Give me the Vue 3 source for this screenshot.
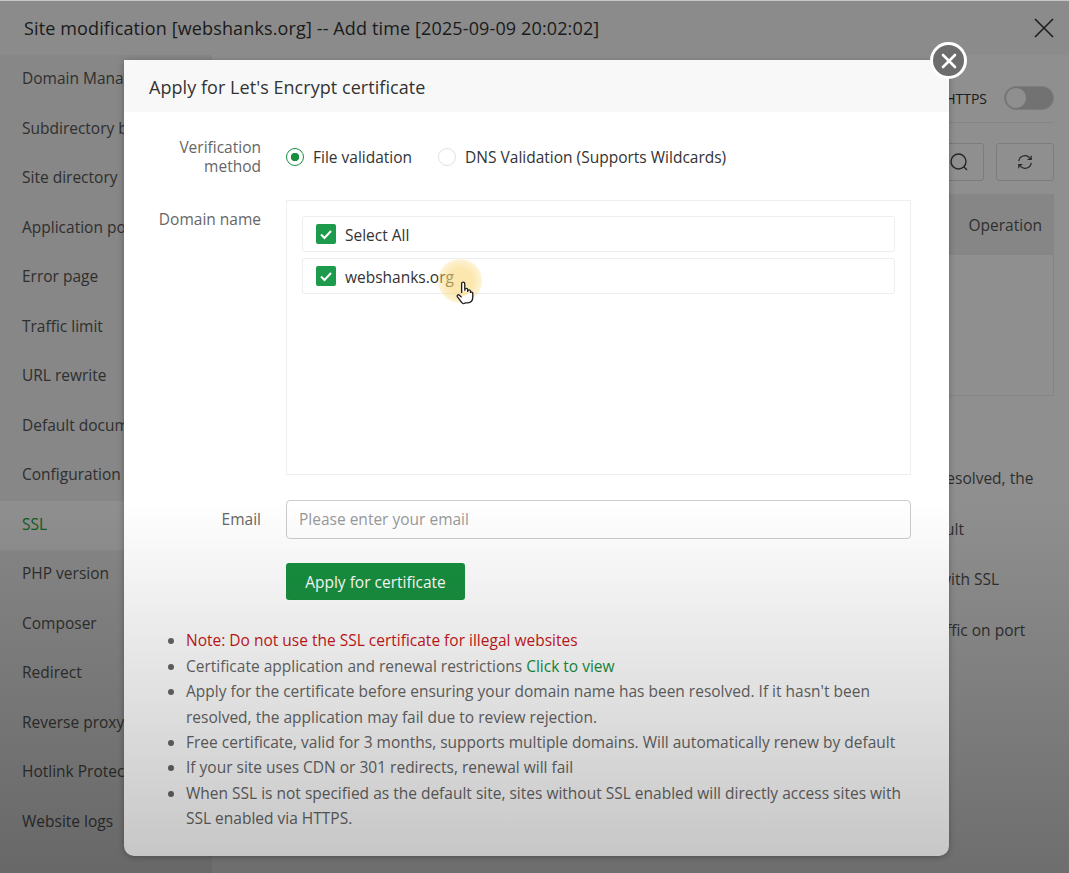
<script setup>
const menu = [
  "Domain Manager",
  "Subdirectory binding",
  "Site directory",
  "Application pool",
  "Error page",
  "Traffic limit",
  "URL rewrite",
  "Default document",
  "Configuration file",
  "SSL",
  "PHP version",
  "Composer",
  "Redirect",
  "Reverse proxy",
  "Hotlink Protection",
  "Website logs",
];

const behindLines = [
  { text: "resolved, the", left: 728 },
  { text: "ult", left: 733 },
  { text: "with SSL", left: 727 },
  { text: "ffic on port", left: 734 },
];

const notes = [
  { text: "Certificate application and renewal restrictions ", link: "Click to view" },
  { text: "Apply for the certificate before ensuring your domain name has been resolved. If it hasn't been resolved, the application may fail due to review rejection." },
  { text: "Free certificate, valid for 3 months, supports multiple domains. Will automatically renew by default" },
  { text: "If your site uses CDN or 301 redirects, renewal will fail" },
  { text: "When SSL is not specified as the default site, sites without SSL enabled will directly access sites with SSL enabled via HTTPS." },
];
</script>

<template>
  <div class="page">
    <div class="drawer">
      <header class="drawer-head">
        <span>Site modification [webshanks.org] -- Add time [2025-09-09 20:02:02]</span>
        <svg class="drawer-close" viewBox="0 0 20 20" width="20" height="20">
          <path d="M1 1 19 19M19 1 1 19" stroke="#333" stroke-width="1.6" fill="none" />
        </svg>
      </header>
      <div class="drawer-body">
        <ul class="menu">
          <li v-for="m in menu" :key="m" :class="{ active: m === 'SSL' }">{{ m }}</li>
        </ul>
        <div class="content">
          <div class="https-row">
            <span>Force HTTPS</span>
            <span class="switch"><i></i></span>
          </div>
          <div class="tools">
            <span class="tool search">
              <svg viewBox="0 0 20 20" width="20" height="20">
                <circle cx="9.5" cy="9.5" r="7.5" stroke="#444" stroke-width="1.4" fill="none" />
                <path d="M15 15 18 18" stroke="#444" stroke-width="1.4" />
              </svg>
            </span>
            <span class="tool refresh">
              <svg viewBox="0 0 18 18" width="16" height="16">
                <path d="M2 8a7 7 0 0 1 12-4l2 2M16 10a7 7 0 0 1-12 4l-2-2M16 2v4h-4M2 16v-4h4" stroke="#444" stroke-width="1.3" fill="none" />
              </svg>
            </span>
          </div>
          <div class="table">
            <div class="table-head">Operation</div>
          </div>
          <div class="tips">
            <p v-for="l in behindLines" :key="l.text" :style="{ paddingLeft: l.left + 'px' }">{{ l.text }}</p>
          </div>
        </div>
      </div>
    </div>

    <div class="dim"></div>

    <section class="modal">
      <h3 class="modal-title">Apply for Let's Encrypt certificate</h3>
      <div class="modal-body">
        <div class="row method">
          <label class="label">Verification method</label>
          <div class="radios">
            <span class="radio on"><i></i>File validation</span>
            <span class="radio"><i></i>DNS Validation (Supports Wildcards)</span>
          </div>
        </div>
        <div class="row domain">
          <label class="label">Domain name</label>
          <div class="domain-box">
            <div class="check-item">
              <span class="check"><svg viewBox="0 0 20 20" width="20" height="20"><path d="M5 10.5 8.5 14 15 7" stroke="#fff" stroke-width="2" fill="none" /></svg></span>
              <span class="check-text">Select All</span>
            </div>
            <div class="check-item">
              <span class="check"><svg viewBox="0 0 20 20" width="20" height="20"><path d="M5 10.5 8.5 14 15 7" stroke="#fff" stroke-width="2" fill="none" /></svg></span>
              <span class="check-text">webshanks.org</span>
            </div>
          </div>
        </div>
        <div class="row email">
          <label class="label">Email</label>
          <input class="input" type="text" placeholder="Please enter your email" />
        </div>
        <div class="row submit">
          <span class="label"></span>
          <button type="button" class="btn">Apply for certificate</button>
        </div>
        <ul class="notes">
          <li class="danger">Note: Do not use the SSL certificate for illegal websites</li>
          <li v-for="n in notes" :key="n.text">{{ n.text }}<a v-if="n.link">{{ n.link }}</a></li>
        </ul>
      </div>
    </section>

    <button type="button" class="modal-close">
      <svg viewBox="0 0 20 20" width="20" height="20">
        <path d="M4 4 16 16M16 4 4 16" stroke="#fff" stroke-width="2.6" stroke-linecap="round" />
      </svg>
    </button>

    <div class="halo"></div>
    <svg class="cursor" viewBox="0 0 16 22" width="18" height="24" preserveAspectRatio="none">
      <path d="M5 11V2.5a1.4 1.4 0 0 1 2.8 0V9m0-1a1.3 1.3 0 0 1 2.6 0v2m0-1a1.3 1.3 0 0 1 2.5 0v2m0-.5a1.2 1.2 0 0 1 2 .5v4c0 3-1.5 5-4.5 5H8.5C6.500 21.500 5.500 20.500 4.500 19L1.300 14.500c-.8-1.300.7-2.500 1.800-1.500L5 15" stroke="#222" stroke-width="1.2" fill="#fff" stroke-linejoin="round" />
    </svg>
    <div class="fade"></div>
  </div>
</template>

<style>
html, body { margin: 0; background: #fff; }
</style>

<style scoped>
.page { position: relative; width: 1069px; height: 873px; overflow: hidden; font-family: "Open Sans", "Liberation Sans", sans-serif; font-size: 15.5px; color: #333; background: #fff; }

.drawer { height: 873px; display: flex; flex-direction: column; }
.drawer-head { height: 55px; flex: none; display: flex; align-items: center; justify-content: space-between; padding: 0 15px 0 24px; background: #f8f8f8; font-size: 18px; letter-spacing: 0.13px; color: #333; box-sizing: border-box; }
.drawer-close { flex: none; }
.drawer-body { flex: 1; display: flex; min-height: 0; }
.menu { width: 212px; flex: none; list-style: none; margin: 0; padding: 0; background: #f0f0f0; color: #555; box-sizing: border-box; }
.menu li { height: 49.5px; line-height: 47px; padding-left: 22px; white-space: nowrap; }
.menu li.active { background: #fff; color: #20a53a; }

.content { flex: 1; min-width: 0; background: #fff; padding-right: 15px; box-sizing: border-box; display: flex; flex-direction: column; align-items: flex-end; }
.https-row { align-self: stretch; box-sizing: border-box; height: 68px; padding: 31px 0 12px; border-bottom: 1px solid #eee; display: flex; justify-content: flex-end; align-items: center; gap: 17px; color: #333; font-size: 14px; }
.switch { width: 50px; height: 24px; border-radius: 12px; background: #ccc; display: block; position: relative; border: 1px solid #ddd; box-sizing: border-box; }
.switch i { position: absolute; left: 0; top: 0; width: 22px; height: 22px; border-radius: 50%; background: #fff; border: 1px solid #ccc; box-sizing: border-box; }
.tools { margin-top: 20px; display: flex; gap: 12px; }
.tool { height: 38px; border: 1px solid #ddd; border-radius: 3px; box-sizing: border-box; display: flex; align-items: center; justify-content: center; }
.tool.search { width: 50px; }
.tool.refresh { width: 58px; }
.table { margin-top: 13px; width: 640px; height: 202px; border: 1px solid #eee; box-sizing: border-box; }
.table-head { height: 60px; background: #efefef; text-align: right; padding-right: 11px; line-height: 60px; color: #555; }
.tips { align-self: stretch; margin-top: 57px; }
.tips p { margin: 0; line-height: 50.7px; color: #555; white-space: nowrap; }

.dim { position: absolute; inset: 0; background: rgba(0, 0, 0, 0.44); background-clip: padding-box; border-top: 1px solid rgba(0, 0, 0, 0.2); }

.modal { position: absolute; left: 124px; top: 60px; width: 825px; height: 796px; background: #fff; border-radius: 3px 3px 10px 10px; box-shadow: 0 1px 6px rgba(0, 0, 0, 0.3); }
.modal-title { margin: 0; height: 52px; line-height: 54px; padding-left: 25px; background: #f8f8f8; font-size: 18px; font-weight: 400; letter-spacing: 0.05px; color: #333; }
.modal-body { padding: 0 38px 0 0; }
.row { display: flex; gap: 25px; }
.label { width: 137px; flex: none; text-align: right; color: #666; line-height: 19px; }
.method { padding-top: 26px; height: 88px; box-sizing: border-box; align-items: flex-start; }
.method .label { padding-left: 30px; box-sizing: border-box; }
.radios { display: flex; gap: 26px; padding-top: 9px; color: #333; }
.radio { display: inline-flex; align-items: center; gap: 9px; line-height: 20px; }
.radio i { width: 18px; height: 18px; border-radius: 50%; border: 1px solid #e2e2e2; background: #fff; box-sizing: border-box; display: block; }
.radio.on i { border: 1.5px solid #178f3f; background: radial-gradient(circle, #178f3f 0 4px, #fff 4.5px); }
.domain .label { padding-top: 10px; }
.domain-box { width: 625px; height: 275px; border: 1px solid #eee; box-sizing: border-box; padding: 15px; display: flex; flex-direction: column; gap: 6px; }
.check-item { height: 36px; border: 1px solid #eee; border-radius: 3px; display: flex; align-items: center; gap: 9px; padding-left: 13px; box-sizing: border-box; color: #333; }
.check-text { padding-top: 2px; }
.check { width: 20px; height: 20px; border-radius: 2px; background: #1d9a4b; display: block; }
.check svg { display: block; }
.email { margin-top: 25px; align-items: center; }
.input { width: 625px; height: 39px; border: 1px solid #ccc; border-radius: 4px; padding: 0 12px 2px; box-sizing: border-box; font: inherit; outline: none; background: transparent; }
.input::placeholder { color: #999; opacity: 1; }
.submit { margin-top: 24px; }
.btn { width: 179px; height: 37px; background: #178f3f; color: #fff; border: none; border-radius: 3px; font: inherit; cursor: pointer; }
.notes { margin: 28.4px 0 0; padding: 0 0 0 62px; line-height: 25.4px; color: #666; }
.notes li::marker { color: #666; }
.notes .danger { color: #c8171a; }
.notes a { color: #178f3f; }

.modal-close { position: absolute; left: 930px; top: 42px; width: 37px; height: 37px; padding: 0; border: 3px solid #fff; border-radius: 50%; background: #6d6d6d; box-sizing: border-box; display: flex; align-items: center; justify-content: center; }
.modal-close svg { display: block; }

.halo { position: absolute; left: 438px; top: 259px; width: 44px; height: 44px; border-radius: 50%; background: radial-gradient(circle, rgba(250, 215, 120, 0.6) 0 40%, rgba(250, 215, 120, 0) 100%); }
.cursor { position: absolute; left: 456px; top: 281px; }
.fade { position: absolute; inset: 0; pointer-events: none; background: linear-gradient(to bottom, rgba(0, 0, 0, 0) 500px, rgba(0, 0, 0, 0.23) 873px); }
</style>
